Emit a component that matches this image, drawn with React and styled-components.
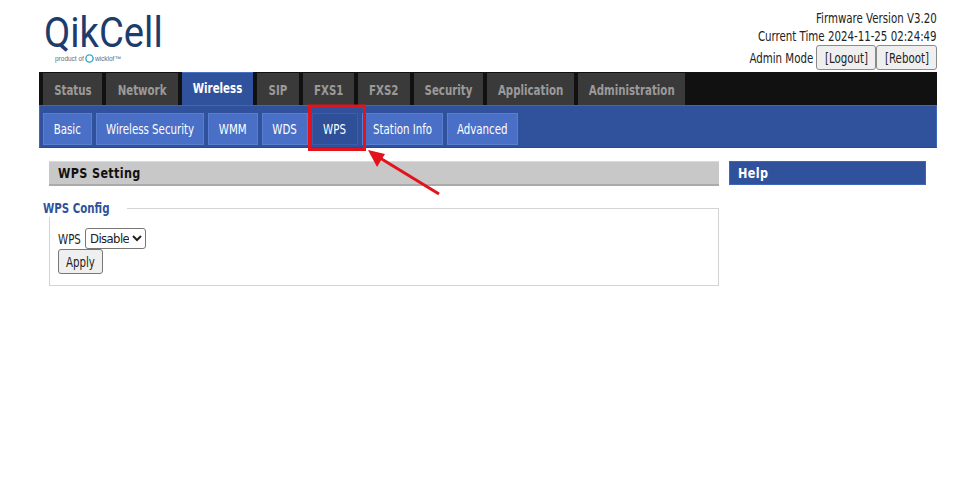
import React from "react";
import styled, { createGlobalStyle } from "styled-components";

const Global = createGlobalStyle`
  html, body { margin: 0; padding: 0; background: #fff; }
  body { font-family: "DejaVu Sans", sans-serif; font-stretch: condensed; }
`;

const Narrow = styled.span`
  display: inline-block;
  white-space: nowrap;
  transform: scaleX(${(p) => p.$s || 0.785});
  transform-origin: ${(p) => p.$origin || "center"};
`;

const Page = styled.div`
  position: relative;
  width: 975px;
  height: 494px;
  overflow: hidden;
  padding: 0 38px 0 39px;
  box-sizing: border-box;
`;

const Header = styled.header`
  height: 72px;
  display: flex;
  justify-content: space-between;
`;

const Logo = styled.div`
  padding: 12px 0 0 5px;
  display: flex;
  flex-direction: column;
`;

const LogoName = styled.div`
  font-family: "Roboto", sans-serif;
  font-stretch: normal;
  font-size: 42px;
  line-height: 42px;
  color: #1d3c6e;
`;

const LogoSub = styled.div`
  display: flex;
  align-items: center;
  gap: 1px;
  margin: 0 0 0 11px;
  font-family: "Liberation Sans", sans-serif;
  font-size: 6.5px;
  line-height: 9px;
  color: #5d6d88;
`;

const Info = styled.div`
  padding-top: 9px;
  text-align: right;
  font-size: 14.5px;
  line-height: 18px;
  color: #222;
`;

const AdminRow = styled.div`
  display: flex;
  justify-content: flex-end;
  align-items: center;
  height: 25px;
`;

const AdminLabel = styled.div`
  margin-right: 3px;
`;

const HeaderButton = styled.button`
  height: 25px;
  width: ${(p) => p.$w}px;
  padding: 0;
  font: inherit;
  overflow: hidden;
  font-size: 14.5px;
  color: #222;
  background: #efefef;
  border: 1px solid #8a8a8a;
  border-radius: 3px;
`;

const MainNav = styled.nav`
  height: 33px;
  background: #111;
  display: flex;
  gap: 4px;
  padding-left: 4px;
`;

const MainTab = styled.div`
  width: ${(p) => p.$w}px;
  margin-top: ${(p) => (p.$active ? 0 : 1)}px;
  display: flex;
  align-items: center;
  justify-content: center;
  font-size: 14.5px;
  font-weight: 700;
  padding-top: ${(p) => (p.$active ? 0 : 1)}px;
  padding-bottom: ${(p) => (p.$active ? 3 : 0)}px;
  box-sizing: border-box;
  color: ${(p) => (p.$active ? "#fff" : "#9a9a9a")};
  background: ${(p) => (p.$active ? "#30529c" : "#3a3a3a")};
  border-top: ${(p) => (p.$active ? "1px solid #4a70c4" : "none")};
`;

const SubNav = styled.nav`
  height: 43px;
  box-sizing: border-box;
  background: #30529c;
  border: 1px solid #3f66b8;
  border-bottom-color: #2a4a8c;
  display: flex;
  gap: 4px;
  padding: 7px 0 2px 3px;
`;

const SubTab = styled.div`
  width: ${(p) => p.$w}px;
  display: flex;
  align-items: center;
  justify-content: center;
  box-sizing: border-box;
  font-size: 14.5px;
  color: #fff;
  background: ${(p) => (p.$active ? "#2f4f98" : "#4a6fc6")};
  border: 1px solid ${(p) => (p.$active ? "#3a5dac" : "#5a7ed0")};
`;

const Content = styled.main`
  display: flex;
  padding: 13px 11px 0 10px;
  gap: 10px;
`;

const Left = styled.section`
  width: 670px;
`;

const Right = styled.aside`
  width: 197px;
`;

const SettingTitle = styled.h2`
  margin: 0;
  height: 25px;
  box-sizing: border-box;
  background: #c8c8c8;
  border-top: 1px solid #dadada;
  border-bottom: 2px solid #aaa;
  padding-left: 9px;
  font-size: 14px;
  font-weight: 700;
  letter-spacing: 0.4px;
  line-height: 23px;
  color: #111;
`;

const HelpTitle = styled.h2`
  margin: 0;
  height: 24px;
  box-sizing: border-box;
  background: #30529c;
  border: 1px solid #3f66b8;
  padding-left: 8px;
  font-size: 14px;
  font-weight: 700;
  letter-spacing: 0.4px;
  line-height: 23px;
  color: #fff;
`;

const Config = styled.fieldset`
  margin: 14px 0 0;
  padding: 0 0 0 8px;
  height: 86px;
  box-sizing: border-box;
  border: 1px solid #d4d4d4;
`;

const ConfigLegend = styled.legend`
  width: 84px;
  margin-left: -15px;
  padding: 0;
  font-size: 14.5px;
  font-weight: 700;
  line-height: 17px;
  color: #30529c;
`;

const FieldRow = styled.div`
  display: flex;
  align-items: center;
  height: 21px;
  margin-top: 11px;
  font-size: 14.5px;
  color: #222;
`;

const FieldLabel = styled.label`
  width: 27px;
`;

const Select = styled.select`
  width: 61px;
  height: 21px;
  padding: 0;
  font-family: inherit;
  font-stretch: condensed;
  font-size: 13px;
  letter-spacing: -0.6px;
  color: #222;
  background: #fff;
  border: 1px solid #777;
  border-radius: 3px;
`;

const ApplyButton = styled.button`
  display: block;
  width: 45px;
  height: 25px;
  margin-top: 0;
  padding: 0;
  font: inherit;
  font-size: 14.5px;
  color: #222;
  background: #efefef;
  border: 1px solid #777;
  border-radius: 3px;
`;

const Callout = styled.svg`
  position: absolute;
  left: 0;
  top: 0;
  pointer-events: none;
`;

const mainTabs = [
  ["Status", 59], ["Network", 72], ["Wireless", 71], ["SIP", 42], ["FXS1", 51],
  ["FXS2", 52], ["Security", 69], ["Application", 87], ["Administration", 107],
];
const subTabs = [
  ["Basic", 49], ["Wireless Security", 108], ["WMM", 50], ["WDS", 46], ["WPS", 46],
  ["Station Info", 81], ["Advanced", 71],
];

export default function App() {
  return (
    <Page>
      <Global />
      <Header>
        <Logo>
          <LogoName><Narrow $s={0.91} $origin="left">QikCell</Narrow></LogoName>
          <LogoSub>
            product of
            <svg width="9" height="9" viewBox="0 0 9 9">
              <circle cx="4.5" cy="4.5" r="3.6" fill="none" stroke="#35a6c8" strokeWidth="1.4" />
            </svg>
            wicklof™
          </LogoSub>
        </Logo>
        <Info>
          <div><Narrow $origin="right">Firmware Version V3.20</Narrow></div>
          <div><Narrow $origin="right">Current Time 2024-11-25 02:24:49</Narrow></div>
          <AdminRow>
            <AdminLabel><Narrow $origin="right">Admin Mode</Narrow></AdminLabel>
            <HeaderButton $w={60}><Narrow>[Logout]</Narrow></HeaderButton>
            <HeaderButton $w={61}><Narrow>[Reboot]</Narrow></HeaderButton>
          </AdminRow>
        </Info>
      </Header>
      <MainNav>
        {mainTabs.map(([t, w]) => (
          <MainTab key={t} $w={w} $active={t === "Wireless"}><Narrow>{t}</Narrow></MainTab>
        ))}
      </MainNav>
      <SubNav>
        {subTabs.map(([t, w]) => (
          <SubTab key={t} $w={w} $active={t === "WPS"}><Narrow>{t}</Narrow></SubTab>
        ))}
      </SubNav>
      <Content>
        <Left>
          <SettingTitle><Narrow $s={0.89} $origin="left">WPS Setting</Narrow></SettingTitle>
          <Config>
            <ConfigLegend><Narrow $origin="left">WPS Config</Narrow></ConfigLegend>
            <FieldRow>
              <FieldLabel><Narrow $origin="left">WPS</Narrow></FieldLabel>
              <Select defaultValue="Disable">
                <option>Disable</option>
                <option>Enable</option>
              </Select>
            </FieldRow>
            <ApplyButton><Narrow>Apply</Narrow></ApplyButton>
          </Config>
        </Left>
        <Right>
          <HelpTitle><Narrow $s={0.89} $origin="left">Help</Narrow></HelpTitle>
        </Right>
      </Content>
      <Callout width="975" height="494" viewBox="0 0 975 494">
        <rect x="309.5" y="106" width="55" height="43.5" fill="none" stroke="#e2131b" strokeWidth="3" />
        <line x1="439" y1="194" x2="380" y2="158" stroke="#e2131b" strokeWidth="3" />
        <polygon points="368,150 385,154 377,167" fill="#e2131b" />
      </Callout>
    </Page>
  );
}
